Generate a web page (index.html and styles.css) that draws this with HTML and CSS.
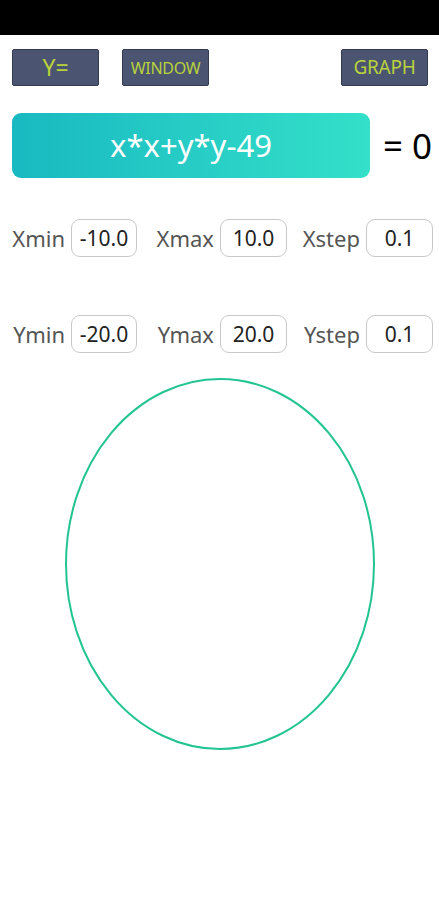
FILE: index.html
```html
<!DOCTYPE html>
<html lang="en">
<head>
    <meta charset="UTF-8">
    <meta name="viewport" content="width=device-width, initial-scale=1.0">
    <title>Graph</title>
    <link rel="stylesheet" href="styles.css">
</head>
<body>
    <!-- Status bar -->
    <div class="status-bar"></div>

    <!-- Mode buttons -->
    <div class="toolbar">
        <button class="mode-btn btn-y">Y=</button>
        <button class="mode-btn btn-window">WINDOW</button>
        <button class="mode-btn btn-graph">GRAPH</button>
    </div>

    <!-- Equation -->
    <div class="equation-row">
        <div class="equation">x*x+y*y-49</div>
        <span class="equals">= 0</span>
    </div>

    <!-- Window settings -->
    <div class="range-row">
        <span class="range-label">Xmin</span>
        <span class="range-value">-10.0</span>
        <span class="range-label">Xmax</span>
        <span class="range-value">10.0</span>
        <span class="range-label">Xstep</span>
        <span class="range-value">0.1</span>
    </div>

    <div class="range-row">
        <span class="range-label">Ymin</span>
        <span class="range-value">-20.0</span>
        <span class="range-label">Ymax</span>
        <span class="range-value">20.0</span>
        <span class="range-label">Ystep</span>
        <span class="range-value">0.1</span>
    </div>

    <!-- Graph -->
    <div class="graph">
        <svg width="312" height="374" viewBox="0 0 312 374">
            <ellipse cx="156" cy="187" rx="154" ry="185" fill="none" stroke="#22c491" stroke-width="2"/>
        </svg>
    </div>
</body>
</html>
```

FILE: styles.css
```css
* {
    margin: 0;
    padding: 0;
    box-sizing: border-box;
    font-family: 'Noto Sans', 'Liberation Sans', sans-serif;
}

body {
    width: 439px;
    height: 900px;
    background: #fff;
    overflow: hidden;
}

/* Status bar */
.status-bar {
    height: 35px;
    background: #000;
}

/* Toolbar */
.toolbar {
    display: flex;
    padding: 14px 11px 0 12px;
}

.mode-btn {
    width: 87px;
    height: 37px;
    background: #4b5470;
    border: 1px solid #333a52;
    border-radius: 2px;
    color: #b9d33c;
    display: flex;
    align-items: center;
    justify-content: center;
    line-height: 1;
}

.btn-y {
    font-size: 23px;
}

.btn-window {
    margin-left: 23px;
    font-size: 16px;
    letter-spacing: -0.3px;
}

.btn-graph {
    margin-left: auto;
    font-size: 19px;
    letter-spacing: -0.3px;
}

/* Equation */
.equation-row {
    display: flex;
    align-items: center;
    margin-top: 27px;
    padding-left: 12px;
}

.equation {
    width: 358px;
    height: 65px;
    border-radius: 9px;
    background: linear-gradient(90deg, #19b9c1, #34e0c9);
    color: #fff;
    font-size: 31px;
    display: flex;
    align-items: center;
    justify-content: center;
    padding-bottom: 2px;
}

.equals {
    margin-left: 13px;
    font-size: 35px;
    color: #000;
    line-height: 1;
}

/* Range settings */
.range-row {
    display: grid;
    grid-template-columns: 61px 66px 83px 67px 79px 67px;
    align-items: center;
    height: 38px;
    padding-left: 10px;
    margin-top: 41px;
}

.range-row + .range-row {
    margin-top: 58px;
}

.range-label {
    font-size: 22px;
    color: #555;
    text-align: right;
    padding-right: 6px;
}

.range-value {
    height: 38px;
    border: 1px solid #c8c8c8;
    border-radius: 9px;
    font-size: 21px;
    color: #222;
    display: flex;
    align-items: center;
    justify-content: center;
}

/* Graph */
.graph {
    margin-top: 24px;
    padding-left: 64px;
}

.graph svg {
    display: block;
}
```
